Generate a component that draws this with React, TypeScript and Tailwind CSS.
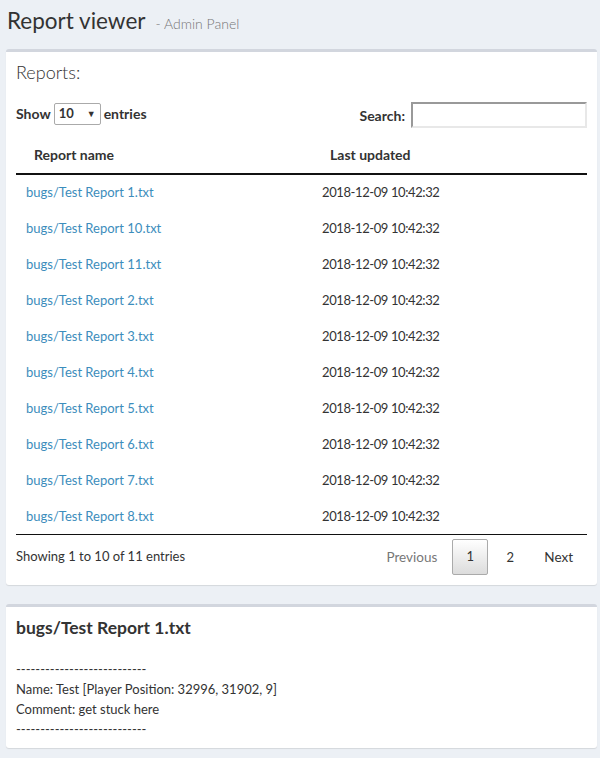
import React from "react";

const rows = [
  "bugs/Test Report 1.txt",
  "bugs/Test Report 10.txt",
  "bugs/Test Report 11.txt",
  "bugs/Test Report 2.txt",
  "bugs/Test Report 3.txt",
  "bugs/Test Report 4.txt",
  "bugs/Test Report 5.txt",
  "bugs/Test Report 6.txt",
  "bugs/Test Report 7.txt",
  "bugs/Test Report 8.txt",
];

const dashes = "---------------------------";

export default function App() {
  return (
    <div className="min-h-[758px] bg-[#ecf0f5] text-[#333] font-['Lato','Liberation_Sans',sans-serif] text-[14px]">
      <div className="pl-[7px] pt-[4px] h-[49px] flex items-baseline gap-[10px]">
        <h1 className="text-[22.5px] leading-[34px] font-normal text-[#333]">Report viewer</h1>
        <span className="text-[14px] font-light text-[#777]">- Admin Panel</span>
      </div>

      <div className="ml-[6px] mr-[3px] bg-white rounded-[3px] border-t-[3px] border-[#d2d6de] shadow-[0_1px_1px_rgba(0,0,0,0.1)]">
        <div className="px-[10px] pt-[10px] pb-[10px]">
          <h3 className="text-[18px] leading-[20px] font-light">Reports:</h3>
        </div>
        <div className="px-[10px] pt-[10px] pb-[10px]">
          <div className="flex items-center justify-between h-[26px]">
            <div className="flex items-center gap-[3px] font-bold -mt-[3px]">
              <span>Show</span>
              <div className="w-[47px] h-[22px] border border-[#aaa] rounded-[2px] flex items-center justify-between px-[4px]">
                <span className="font-bold text-[13px]">10</span>
                <span className="text-[9px] font-normal text-[#333]">▼</span>
              </div>
              <span>entries</span>
            </div>
            <div className="flex items-center gap-[6px] font-bold">
              <span>Search:</span>
              <div className="w-[176px] h-[26px] border-2 border-t-[#999] border-l-[#999] border-r-[#e8e8e8] border-b-[#e8e8e8]" />
            </div>
          </div>

          <table className="w-full mt-[7px] border-collapse">
            <thead>
              <tr className="border-b-2 border-[#111]">
                <th className="text-left font-bold h-[39px] pl-[18px] w-[296px]">Report name</th>
                <th className="text-left font-bold h-[39px] pl-[18px]">Last updated</th>
              </tr>
            </thead>
            <tbody>
              {rows.map((r) => (
                <tr key={r} className="h-[36px]">
                  <td className="pl-[10px] pt-[1px] text-[13px] text-[#3c8dbc]">{r}</td>
                  <td className="pl-[10px] pt-[1px] text-[13px] tracking-[-0.4px]">2018-12-09 10:42:32</td>
                </tr>
              ))}
            </tbody>
          </table>
          <div className="border-t border-[#111]" />

          <div className="flex items-center justify-between pt-[4px]">
            <span className="text-[13px]">Showing 1 to 10 of 11 entries</span>
            <div className="flex items-center">
              <span className="pl-[12px] pr-[15px] text-[#777] leading-[36px] text-[13.5px]">Previous</span>
              <span className="w-[36px] h-[36px] flex items-center justify-center border border-[#aaa] rounded-[2px] bg-gradient-to-b from-white to-[#dcdcdc] text-[13px]">1</span>
              <span className="w-[44px] text-center leading-[36px] text-[13px]">2</span>
              <span className="pl-[12px] pr-[14px] leading-[36px] text-[13.5px]">Next</span>
            </div>
          </div>
        </div>
      </div>

      <div className="mt-[19px] ml-[6px] mr-[3px] bg-white rounded-[3px] border-t-[3px] border-[#d2d6de] shadow-[0_1px_1px_rgba(0,0,0,0.1)]">
        <div className="px-[10px] pt-[10px] pb-[10px]">
          <h3 className="text-[17.5px] leading-[22px] font-bold">bugs/Test Report 1.txt</h3>
        </div>
        <div className="px-[10px] pt-[10px] pb-[9px] leading-[20px] text-[13px]">
          <div>{dashes}</div>
          <div>Name: Test [Player Position: 32996, 31902, 9]</div>
          <div>Comment: get stuck here</div>
          <div>{dashes}</div>
        </div>
      </div>
      <div className="h-[11px]" />
    </div>
  );
}
